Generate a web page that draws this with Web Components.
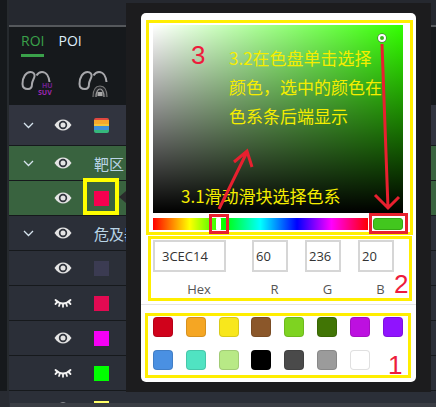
<!DOCTYPE html>
<html>
<head>
<meta charset="utf-8">
<style>
html, body { margin: 0; padding: 0; background: #16191c; }
body { width: 436px; height: 407px; overflow: hidden; font-family: "Open Sans", "Noto Sans CJK SC", sans-serif; }
</style>
</head>
<body>
<app-shell>
  <roi-panel slot="panel">
    <roi-row tone="head" chevron swatch="stack"></roi-row>
    <roi-row tone="green" chevron label="靶区"></roi-row>
    <roi-row tone="green" swatch="#f5004f" marked></roi-row>
    <roi-row chevron label="危及器官"></roi-row>
    <roi-row swatch="#3b3b52"></roi-row>
    <roi-row swatch="#e30a52" closed></roi-row>
    <roi-row swatch="#f500f5"></roi-row>
    <roi-row swatch="#00ff00" closed></roi-row>
    <roi-row swatch="#ffff66"></roi-row>
  </roi-panel>
  <color-popover slot="popover"></color-popover>
</app-shell>

<script>
const eyeOpen = `<svg width="18" height="12" viewBox="0 0 18 12"><path d="M.5 6C3 2 6 .4 9 .4S15 2 17.500 6C15 10 12 11.600 9 11.600S3 10 .5 6Z" fill="#e4e4e4"/><circle cx="9" cy="6" r="4.200" fill="#30343c"/><circle cx="9" cy="6" r="2.500" fill="#e4e4e4"/></svg>`
const eyeClosed = `<svg width="18" height="12" viewBox="0 0 18 12" fill="none" stroke="#f2f2f2" stroke-width="1.800" stroke-linecap="round"><path d="M1.500 3C4 5.500 6.500 6.500 9 6.500s5-1 7.500-3.500"/><path d="M3.500 5L1.500 7M6 6.300L5 9M9 7V9.800M12 6.300L13 9M14.500 5l2 2"/></svg>`
const chevron = `<svg width="11" height="7" viewBox="0 0 11 7" fill="none" stroke="#d6e4ee" stroke-width="1.300"><path d="M1 1L5.500 5.500L10 1"/></svg>`
const lobes = `<path d="M1.500 14C1.500 7 5 2 9.500 2c3 0 4.500 2 4 4.500C13 9 11 11 11 14c0 3-1 5-4 5S1.500 18 1.500 14Z"/><path d="M15.500 5.500C17 3 19 2 21 2c4.500 0 7 5 7.500 10"/>`

class AppShell extends HTMLElement {
    constructor() {
        super();
        this.attachShadow({mode: 'open'});
        this.shadowRoot.innerHTML = `
        <style>
        :host { display: block; position: relative; width: 436px; height: 407px; overflow: hidden; background: #16191c; }
        .top { height: 25px; margin-left: 9px; background: #25282f; border-bottom: 2px solid #55585c; }
        .rest { margin-left: 9px; }
        .strip { position: absolute; left: 7px; top: 0; width: 2px; height: 100%; background: #262a2e; }
        .corner { position: absolute; left: 0; top: 391px; width: 9px; height: 16px; background: #282b32; }
        .foot { position: absolute; left: 10px; right: 0; top: 403px; height: 4px; background: #3a3d44; }
        </style>
        <div class="top"></div>
        <div class="rest"><slot name="panel"></slot></div>
        <div class="strip"></div>
        <div class="corner"></div>
        <div class="foot"></div>
        <slot name="popover"></slot>`;
    }
}

class RoiPanel extends HTMLElement {
    constructor() {
        super();
        this.attachShadow({mode: 'open'});
        this.shadowRoot.innerHTML = `
        <style>
        :host { display: block; }
        .tabs { display: flex; gap: 14px; height: 30px; padding-left: 12px; box-sizing: border-box; }
        .tab { font: 14px/28px "Open Sans", sans-serif; color: #dfeefa; height: 30px; box-sizing: border-box; }
        .tab.on { color: #3aa14a; border-bottom: 3px solid #3aa14a; }
        .tools { display: flex; gap: 24px; height: 48px; padding: 13px 0 0 12px; box-sizing: border-box; }
        svg { display: block; }
        </style>
        <div class="tabs"><div class="tab on">ROI</div><div class="tab">POI</div></div>
        <div class="tools">
          <svg width="33" height="26" viewBox="0 0 33 26" fill="none" stroke="#a8a8ac" stroke-width="2">
            ${lobes}
            <text x="21" y="18" font-family="Open Sans" font-weight="700" font-size="7" fill="#6f1f8c" stroke="none">HU</text>
            <text x="17" y="25" font-family="Open Sans" font-weight="700" font-size="7" fill="#9c27b0" stroke="none">SUV</text>
          </svg>
          <svg width="30" height="28" viewBox="0 0 30 28" fill="none" stroke="#a8a8ac" stroke-width="2">
            ${lobes}
            <path d="M15 27c0-8 3-11 7-11s7 3 7 11" stroke-width="1.200" stroke="#777" fill="#26282c"/>
            <path d="M18 27c0-5 2-8 4-8s4 3 4 8" stroke="#999" stroke-width="1.200"/>
            <rect x="19.500" y="22" width="5" height="4" fill="#aaa" stroke="none"/>
          </svg>
        </div>
        <slot></slot>`;
    }
}

class RoiRow extends HTMLElement {
    constructor() {
        super();
        this.attachShadow({mode: 'open'});
    }
    connectedCallback(){
        const tone = this.getAttribute('tone');
        const bg = tone === 'head' ? '#31343f' : tone === 'green' ? '#39633f' : '#2b2f38';
        const h = tone === 'head' ? 40 : 34;
        const swatch = this.getAttribute('swatch');
        let mark = '';
        if(swatch === 'stack'){
            mark = `<div class="stack"></div>`;
        } else if(swatch) {
            mark = `<div class="sq" style="background:${swatch}"></div>`;
        } else {
            mark = `<div class="label">${this.getAttribute('label') || ''}</div>`;
        }
        this.shadowRoot.innerHTML = `
        <style>
        :host { display: block; }
        .row { position: relative; display: grid; grid-template-columns: 38px 32px 1fr; align-items: center; height: ${h}px; background: ${bg}; border-bottom: 1px solid #16191c; }
        .chev { display: flex; justify-content: center; }
        .eye { display: flex; justify-content: center; }
        .mark { padding-left: 15px; display: flex; align-items: center; white-space: nowrap; height: 100%; }
        .sq { width: 15px; height: 15px; flex: none; }
        .stack { width: 15px; height: 15px; flex: none; border-radius: 2px; background: linear-gradient(#e0483f 0 14%, #f5a82e 14% 40%, #f3c53a 40% 55%, #3f8fd8 55% 82%, #35b87c 82%); }
        .label { font: 15px "Noto Sans CJK SC", sans-serif; color: #b9d4e6; }
        .hl { position: absolute; left: 74px; top: -3px; width: 28px; height: 29px; border: 4px solid #ffff00; }
        </style>
        <div class="row">
          <div class="chev">${this.hasAttribute('chevron') ? chevron : ''}</div>
          <div class="eye">${this.hasAttribute('closed') ? eyeClosed : eyeOpen}</div>
          <div class="mark">${mark}</div>
          ${this.hasAttribute('marked') ? '<div class="hl"></div>' : ''}
        </div>`;
    }
}

class ColorSwatch extends HTMLElement {
    constructor() {
        super();
        this.attachShadow({mode: 'open'});
        const c = this.getAttribute('color');
        this.shadowRoot.innerHTML = `
        <style>
        :host { display: block; width: 20px; height: 20px; }
        div { width: 20px; height: 20px; box-sizing: border-box; border-radius: 4px; background: ${c}; border: 1px solid rgba(0,0,0,.12); }
        </style><div></div>`;
    }
}

class NumField extends HTMLElement {
    constructor() {
        super();
        this.attachShadow({mode: 'open'});
        this.shadowRoot.innerHTML = `
        <style>
        :host { display: block; width: var(--w, 36px); }
        .box { height: 32px; box-sizing: border-box; border: 2px solid #d6d6d6; font: 13px/28px "Open Sans", sans-serif; color: #333; padding-left: var(--pad, 2px); }
        .cap { margin-top: 8px; padding-left: var(--cap, 9px); text-align: center; font: 13px/18px "Open Sans", sans-serif; color: #555; }
        </style>
        <div class="box"><slot></slot></div>
        <div class="cap">${this.getAttribute('cap')}</div>`;
    }
}

class ColorPopover extends HTMLElement {
    constructor() {
        super();
        this.attachShadow({mode: 'open'});
        const colors = ['#D0021B','#F5A623','#F8E71C','#8B572A','#7ED321','#417505','#BD10E0','#9013FE','#4A90E2','#50E3C2','#B8E986','#000000','#4A4A4A','#9B9B9B','#FFFFFF'];
        this.shadowRoot.innerHTML = `
        <style>
        :host { position: absolute; left: 126px; top: 3px; width: 305px; height: 389px; background: #1c1c1e; padding: 10px 15px; box-sizing: border-box; font-family: "Open Sans", "Noto Sans CJK SC", sans-serif; }
        .tip { position: absolute; left: -7px; top: 188px; width: 0; height: 0; border: 6px solid transparent; border-left: 0; border-right: 7px solid #2a2a2c; }
        .card { background: #fff; border-radius: 5px; height: 369px; box-sizing: border-box; padding: 12px 13px 0 12px; display: flex; flex-direction: column; }
        .area { height: 188px; background: linear-gradient(to top, #000, rgba(0,0,0,0)), linear-gradient(to right, #fff, rgba(255,255,255,0)), #33ff00; }
        .hue-row { display: flex; gap: 5px; margin-top: 5px; height: 12px; }
        .hue { width: 215px; background: linear-gradient(to right, #f00, #ff0 17%, #0f0 33%, #0ff 50%, #00f 67%, #f0f 83%, #f00); }
        .preview { width: 30px; box-sizing: border-box; border-radius: 3px; background: #42c71e; border: 1px solid #34a814; }
        .fields { display: flex; margin-top: 10px; height: 57px; }
        .fields num-field:nth-child(2) { margin-left: 26px; }
        .fields num-field:nth-child(3), .fields num-field:nth-child(4) { margin-left: 17px; }
        .line { height: 1px; background: #e6e6e6; margin: 7px -13px 0 -12px; }
        .swatches { display: grid; grid-template-columns: repeat(8, 20px); column-gap: 12.800px; row-gap: 13px; margin-top: 12px; }
        .ann { position: absolute; box-sizing: border-box; border: 3px solid #ffee00; }
        .red { position: absolute; box-sizing: border-box; border: 3px solid #e8202f; }
        .thumb { position: absolute; left: 90px; top: 215px; width: 5px; height: 12px; background: #fff; border-radius: 1px; }
        .dot { position: absolute; left: 252px; top: 31px; width: 8px; height: 8px; box-sizing: border-box; border: 2px solid #fff; border-radius: 50%; box-shadow: 0 0 0 .5px #444; background: #3cb020; }
        .note { position: absolute; color: #f5ee00; font: 17px/29px "Noto Sans CJK SC", sans-serif; white-space: nowrap; }
        .num { position: absolute; color: #ed1c3c; font: 26px/30px "Liberation Sans", sans-serif; }
        svg.arrows { position: absolute; left: 0; top: 0; }
        </style>
        <div class="tip"></div>
        <div class="card">
          <div class="area"></div>
          <div class="hue-row"><div class="hue"></div><div class="preview"></div></div>
          <div class="fields">
            <num-field cap="Hex" style="--w:73px;--pad:7px;--cap:19px">3CEC14</num-field>
            <num-field cap="R">60</num-field>
            <num-field cap="G">236</num-field>
            <num-field cap="B">20</num-field>
          </div>
          <div class="line"></div>
          <div class="swatches">${colors.map(c => `<color-swatch color="${c}"></color-swatch>`).join('')}</div>
        </div>
        <div class="thumb"></div>
        <div class="dot"></div>
        <div class="ann" style="left:20px;top:17px;width:267px;height:215px"></div>
        <div class="ann" style="left:22px;top:233px;width:264px;height:65px"></div>
        <div class="ann" style="left:19px;top:310px;width:266px;height:65px"></div>
        <div class="red" style="left:83px;top:211px;width:20px;height:20px"></div>
        <div class="red" style="left:243px;top:210px;width:39px;height:21px"></div>
        <div class="note" style="left:103px;top:40px">3.2在色盘单击选择<br>颜色，选中的颜色在<br>色系条后端显示</div>
        <div class="note" style="left:55px;top:178px">3.1滑动滑块选择色系</div>
        <div class="num" style="left:65px;top:37px">3</div>
        <div class="num" style="left:268px;top:266px">2</div>
        <div class="num" style="left:262px;top:347px">1</div>
        <svg class="arrows" width="305" height="389" fill="none" stroke="#e8202f" stroke-width="3">
          <path d="M93 206L121 149M108 159L121 148L126 164"/>
          <path d="M256 41L262 205M249 192L262 205L273 194"/>
        </svg>`;
    }
}

window.customElements.define('app-shell', AppShell)
window.customElements.define('roi-panel', RoiPanel)
window.customElements.define('roi-row', RoiRow)
window.customElements.define('color-swatch', ColorSwatch)
window.customElements.define('num-field', NumField)
window.customElements.define('color-popover', ColorPopover)
</script>
</body>
</html>
